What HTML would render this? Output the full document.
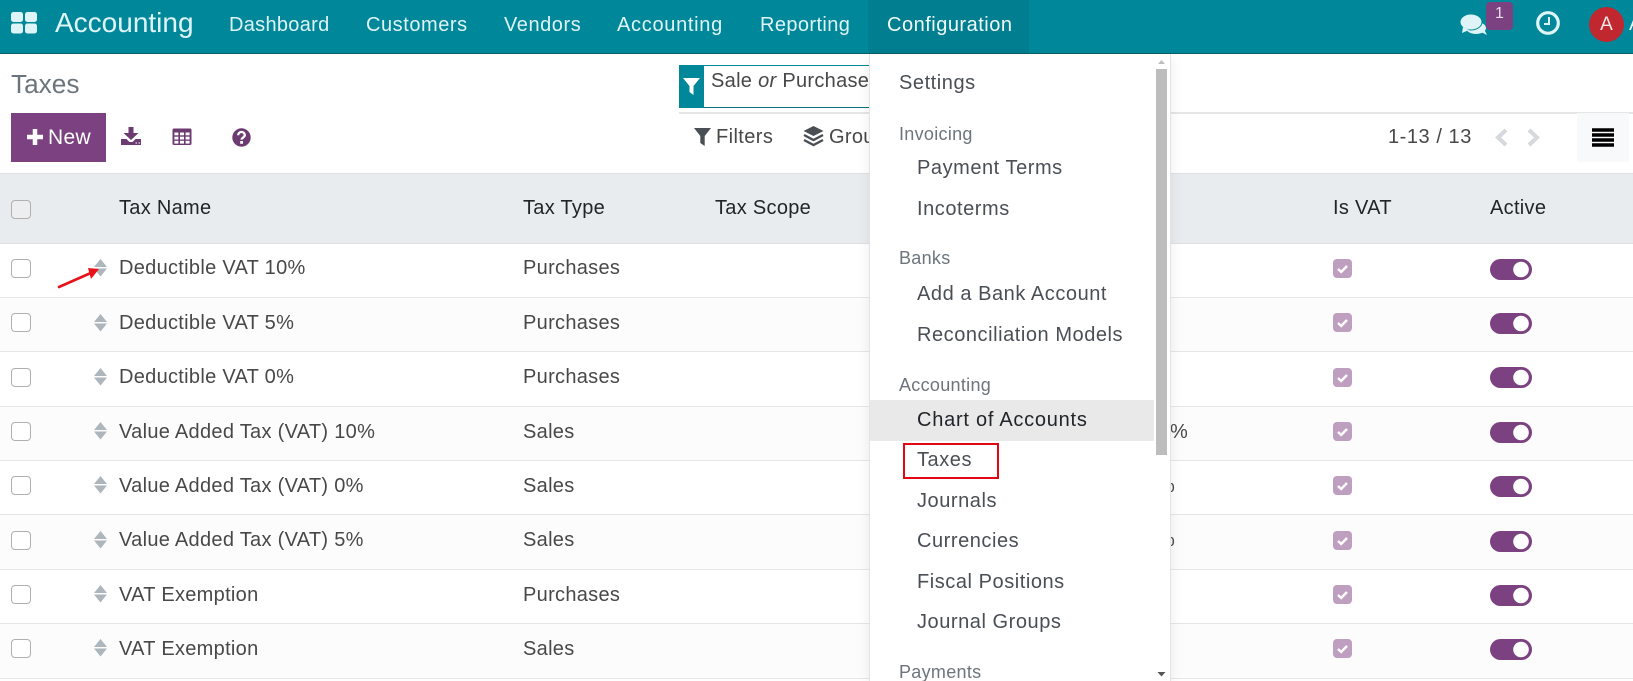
<!DOCTYPE html>
<html><head><meta charset="utf-8"><style>
html,body{margin:0;padding:0;width:1633px;height:681px;overflow:hidden;background:#fff}
body{position:relative;font-family:"Liberation Sans",sans-serif;font-size:20px;letter-spacing:.3px;color:#484848}
.a,.t{position:absolute;white-space:nowrap}
.t{line-height:24px}
.nav{color:#dff4f6;letter-spacing:.4px}
.h{color:#212529;top:197px}
.m{color:#4a4f55;left:917px;letter-spacing:.55px}
.g{color:#6c757d;left:899px;font-size:18px;letter-spacing:.3px}
.cb{position:absolute;left:11px;width:18px;height:17px;border:1px solid #b0b0b0;border-radius:4px;background:#fff}
.row{position:absolute;left:0;width:1633px;border-bottom:1px solid #e6e6e6}
.alt{background:#fcfcfc}
</style></head><body>
<div class="a" style="left:0;top:0;width:1633px;height:53px;background:#00889a;border-bottom:1px solid #0b5d68"></div>
<div class="a" style="left:868px;top:0;width:161px;height:53px;background:#017e8f"></div>
<svg class="a" style="left:11px;top:12px" width="27" height="22"><g fill="#dff4f6"><rect width="12" height="10" rx="2.500"/><rect x="14" width="12" height="10" rx="2.500"/><rect y="11.500" width="12" height="10" rx="2.500"/><rect x="14" y="11.500" width="12" height="10" rx="2.500"/></g></svg>
<div class="t nav" style="left:55px;top:11px;font-size:28px;letter-spacing:0">Accounting</div>
<div class="t nav" style="left:229px;top:13px;letter-spacing:.3px">Dashboard</div>
<div class="t nav" style="left:366px;top:13px;letter-spacing:.55px">Customers</div>
<div class="t nav" style="left:504px;top:13px;letter-spacing:.55px">Vendors</div>
<div class="t nav" style="left:617px;top:13px;letter-spacing:.7px">Accounting</div>
<div class="t nav" style="left:760px;top:13px">Reporting</div>
<div class="t nav" style="left:887px;top:13px;color:#f0fbfc;letter-spacing:.5px">Configuration</div>

<svg class="a" style="left:1460px;top:12px" width="28" height="24"><path d="M21 20l6 3-3-6z" fill="#dff4f6"/><ellipse cx="16" cy="16" rx="10" ry="6" fill="#dff4f6"/><ellipse cx="11" cy="10" rx="11" ry="8" fill="#dff4f6" stroke="#00889a" stroke-width="1"/><path d="M3 15l-1 6 7-3z" fill="#dff4f6"/></svg>
<div class="a" style="left:1486px;top:2px;width:27px;height:28px;background:#7c4180;border-radius:4px;color:#e8dfe8;font-size:16px;letter-spacing:0;text-align:center;line-height:23px">1</div>
<svg class="a" style="left:1535px;top:10px" width="26" height="26"><circle cx="13" cy="13" r="10.300" fill="none" stroke="#dff4f6" stroke-width="3.200"/><path d="M14 7v7H9" fill="none" stroke="#dff4f6" stroke-width="2"/></svg>
<div class="a" style="left:1589px;top:7px;width:35px;height:35px;border-radius:50%;background:#c0272f;color:#f6e8e8;font-size:19px;letter-spacing:0;text-align:center;line-height:35px">A</div>
<div class="t nav" style="left:1629px;top:12px">A</div>

<div class="t" style="left:11px;top:69px;font-size:26.200px;letter-spacing:0;line-height:30px;color:#6c757d">Taxes</div>
<div class="a" style="left:11px;top:113px;width:95px;height:49px;background:#7c4180;color:#fff;line-height:49px"><svg class="a" style="left:15px;top:15px" width="18" height="18"><path d="M9 1v16M1 9h16" stroke="#fff" stroke-width="4.500"/></svg><span class="a" style="left:37px;top:0;font-size:21px">New</span></div>

<svg class="a" style="left:121px;top:126px" width="21" height="20"><path d="M7.500 1h5v6h5l-7.500 7-7.500-7h5z" fill="#6d3a72"/><path d="M0 13h5.500l3 3h3l3-3H20v6H0z" fill="#6d3a72"/><path d="M14.500 17h1.500M17.500 17h1.500" stroke="#fff" stroke-width="1"/></svg>
<svg class="a" style="left:172px;top:128px" width="21" height="18"><rect x=".5" y=".5" width="19" height="16.500" rx="1.500" fill="#6d3a72"/><g fill="#fff"><rect x="2.400" y="4.500" width="4" height="2.800"/><rect x="8" y="4.500" width="4" height="2.800"/><rect x="13.600" y="4.500" width="4" height="2.800"/><rect x="2.400" y="8.700" width="4" height="2.800"/><rect x="8" y="8.700" width="4" height="2.800"/><rect x="13.600" y="8.700" width="4" height="2.800"/><rect x="2.400" y="12.800" width="4" height="2.800"/><rect x="8" y="12.800" width="4" height="2.800"/><rect x="13.600" y="12.800" width="4" height="2.800"/></g></svg>
<svg class="a" style="left:232px;top:128px" width="19" height="19"><circle cx="9.500" cy="9.500" r="9.200" fill="#6d3a72"/><path d="M6.200 7.200c0-4.200 6.600-4.200 6.600-.2 0 2.600-3.200 2.400-3.200 4.600" fill="none" stroke="#fff" stroke-width="2.300"/><rect x="8.200" y="13" width="2.800" height="2.800" fill="#fff"/></svg>

<div class="a" style="left:679px;top:112px;width:954px;height:2px;background:#e6e6e6"></div>
<div class="a" style="left:679px;top:65px;width:190px;height:41px;border-top:1px solid #00889a;border-bottom:1px solid #0b6f7d"></div>
<div class="a" style="left:679px;top:65px;width:25px;height:43px;background:#00889a"></div>
<svg class="a" style="left:682px;top:77px" width="19" height="19"><path d="M1 1h17l-6.500 8v9l-4-3V9z" fill="#fff"/></svg>
<div class="t" style="left:711px;top:69px">Sale <i>or</i> Purchases</div>
<svg class="a" style="left:694px;top:128px" width="18" height="18"><path d="M0 0h17l-6.300 8v10l-4.400-3V8z" fill="#4a4f55"/></svg>
<div class="t" style="left:716px;top:125px;letter-spacing:.4px">Filters</div>
<svg class="a" style="left:803px;top:126px" width="21" height="22"><path d="M10.500 0l10 5-10 5-10-5z" fill="#4a4f55"/><path d="M1 9l9.500 5 9.500-5M1 14l9.500 5 9.500-5" fill="none" stroke="#4a4f55" stroke-width="2.400"/></svg>
<div class="t" style="left:829px;top:125px">Group By</div>

<div class="t" style="left:1388px;top:125px;letter-spacing:.55px">1-13 / 13</div>
<svg class="a" style="left:1493px;top:128px" width="50" height="19"><path d="M13 2L5 9.500l8 7.500M36 2l8 7.500-8 7.500" fill="none" stroke="#d5d8dc" stroke-width="4"/></svg>
<div class="a" style="left:1577px;top:113px;width:52px;height:49px;background:#f8f9fa"></div>
<svg class="a" style="left:1592px;top:128px" width="22" height="19"><path d="M0 2h22M0 7h22M0 12h22M0 17h22" stroke="#000" stroke-width="3.600"/></svg>

<div class="a" style="left:0;top:173px;width:1633px;height:71px;background:#e9ecef;border-top:1px solid #dfe2e5;box-sizing:border-box;border-bottom:1px solid #dfe2e5"></div>
<div class="cb" style="top:200px;background:#eceef0"></div>
<div class="t h" style="left:119px;top:196px">Tax Name</div>
<div class="t h" style="left:523px;top:196px">Tax Type</div>
<div class="t h" style="left:715px;top:196px">Tax Scope</div>
<div class="t h" style="left:1333px;top:196px">Is VAT</div>
<div class="t h" style="left:1490px;top:196px">Active</div>

<svg width="0" height="0" style="position:absolute"><defs>
<symbol id="hd" viewBox="0 0 13 18"><path d="M6.500 0L13 8H0zM0 9.500h13l-6.500 8z" fill="#adb5bd"/></symbol>
<symbol id="ck" viewBox="0 0 19 19"><rect width="19" height="19" rx="4" fill="#bf9fc0"/><path d="M5 10l3.200 3 5.800-6" fill="none" stroke="#fff" stroke-width="2.400"/></symbol>
<symbol id="tg" viewBox="0 0 42 21"><rect width="42" height="21" rx="10.500" fill="#7c4180"/><circle cx="31" cy="10.500" r="7.800" fill="#fff"/></symbol>
</defs></svg>

<div class="row" style="top:244px;height:53px"><div class="cb" style="top:15px"></div><svg class="a" style="left:94px;top:15px" width="13" height="18"><use href="#hd"/></svg><div class="t" style="left:119px;top:12px">Deductible VAT 10%</div><div class="t" style="left:523px;top:12px">Purchases</div><svg class="a" style="left:1333px;top:15px" width="19" height="19"><use href="#ck"/></svg><svg class="a" style="left:1490px;top:15px" width="42" height="21"><use href="#tg"/></svg></div>
<div class="row alt" style="top:298px;height:53px"><div class="cb" style="top:15px"></div><svg class="a" style="left:94px;top:16px" width="13" height="18"><use href="#hd"/></svg><div class="t" style="left:119px;top:13px">Deductible VAT 5%</div><div class="t" style="left:523px;top:13px">Purchases</div><svg class="a" style="left:1333px;top:15px" width="19" height="19"><use href="#ck"/></svg><svg class="a" style="left:1490px;top:15px" width="42" height="21"><use href="#tg"/></svg></div>
<div class="row" style="top:352px;height:54px"><div class="cb" style="top:16px"></div><svg class="a" style="left:94px;top:16px" width="13" height="18"><use href="#hd"/></svg><div class="t" style="left:119px;top:13px">Deductible VAT 0%</div><div class="t" style="left:523px;top:13px">Purchases</div><svg class="a" style="left:1333px;top:16px" width="19" height="19"><use href="#ck"/></svg><svg class="a" style="left:1490px;top:15px" width="42" height="21"><use href="#tg"/></svg></div>
<div class="row alt" style="top:407px;height:53px"><div class="cb" style="top:15px"></div><svg class="a" style="left:94px;top:15px" width="13" height="18"><use href="#hd"/></svg><div class="t" style="left:119px;top:13px">Value Added Tax (VAT) 10%</div><div class="t" style="left:523px;top:13px">Sales</div><div class="t" style="left:1170px;top:13px">%</div><svg class="a" style="left:1333px;top:15px" width="19" height="19"><use href="#ck"/></svg><svg class="a" style="left:1490px;top:15px" width="42" height="21"><use href="#tg"/></svg></div>
<div class="row" style="top:461px;height:53px"><div class="cb" style="top:15px"></div><svg class="a" style="left:94px;top:15px" width="13" height="18"><use href="#hd"/></svg><div class="t" style="left:119px;top:13px">Value Added Tax (VAT) 0%</div><div class="t" style="left:523px;top:13px">Sales</div><div class="t" style="left:1157px;top:13px">%</div><svg class="a" style="left:1333px;top:15px" width="19" height="19"><use href="#ck"/></svg><svg class="a" style="left:1490px;top:15px" width="42" height="21"><use href="#tg"/></svg></div>
<div class="row alt" style="top:515px;height:54px"><div class="cb" style="top:16px"></div><svg class="a" style="left:94px;top:16px" width="13" height="18"><use href="#hd"/></svg><div class="t" style="left:119px;top:13px">Value Added Tax (VAT) 5%</div><div class="t" style="left:523px;top:13px">Sales</div><div class="t" style="left:1157px;top:13px">%</div><svg class="a" style="left:1333px;top:16px" width="19" height="19"><use href="#ck"/></svg><svg class="a" style="left:1490px;top:16px" width="42" height="21"><use href="#tg"/></svg></div>
<div class="row" style="top:570px;height:53px"><div class="cb" style="top:15px"></div><svg class="a" style="left:94px;top:15px" width="13" height="18"><use href="#hd"/></svg><div class="t" style="left:119px;top:13px">VAT Exemption</div><div class="t" style="left:523px;top:13px">Purchases</div><svg class="a" style="left:1333px;top:15px" width="19" height="19"><use href="#ck"/></svg><svg class="a" style="left:1490px;top:15px" width="42" height="21"><use href="#tg"/></svg></div>
<div class="row alt" style="top:624px;height:54px"><div class="cb" style="top:15px"></div><svg class="a" style="left:94px;top:15px" width="13" height="18"><use href="#hd"/></svg><div class="t" style="left:119px;top:13px">VAT Exemption</div><div class="t" style="left:523px;top:13px">Sales</div><svg class="a" style="left:1333px;top:15px" width="19" height="19"><use href="#ck"/></svg><svg class="a" style="left:1490px;top:15px" width="42" height="21"><use href="#tg"/></svg></div>

<svg class="a" style="left:55px;top:258px" width="56" height="32"><path d="M4 29L38 14" stroke="#e8121a" stroke-width="2.600" stroke-linecap="round"/><path d="M33 10l11 1-8 10z" fill="#e8121a"/></svg>

<div class="a" style="left:869px;top:54px;width:300px;height:627px;background:#fff;border-left:1px solid #e4e4e4;border-right:1px solid #e4e4e4;box-shadow:0 4px 12px rgba(0,0,0,.08)"></div>
<div class="a" style="left:870px;top:400px;width:284px;height:41px;background:#e9e9e9"></div>
<svg class="a" style="left:1154px;top:54px" width="15" height="627"><rect x="2" y="15" width="11" height="386" fill="#bdbdbd"/><path d="M4 10l3.500-4 3.500 4z" fill="#bdbdbd"/><path d="M3.500 618h8l-4 4.500z" fill="#555"/></svg>

<div class="t m" style="left:899px;top:71px">Settings</div>
<div class="t g" style="top:122px">Invoicing</div>
<div class="t m" style="top:156px">Payment Terms</div>
<div class="t m" style="top:197px">Incoterms</div>
<div class="t g" style="top:246px">Banks</div>
<div class="t m" style="top:282px">Add a Bank Account</div>
<div class="t m" style="top:323px">Reconciliation Models</div>
<div class="t g" style="top:373px">Accounting</div>
<div class="t m" style="top:408px;color:#212529;letter-spacing:.75px">Chart of Accounts</div>
<div class="t m" style="top:448px">Taxes</div>
<div class="t m" style="top:489px">Journals</div>
<div class="t m" style="top:529px">Currencies</div>
<div class="t m" style="top:570px">Fiscal Positions</div>
<div class="t m" style="top:610px">Journal Groups</div>
<div class="t g" style="top:660px">Payments</div>
<div class="a" style="left:903px;top:443px;width:92px;height:32px;border:2.500px solid #e30613"></div>
</body></html>
